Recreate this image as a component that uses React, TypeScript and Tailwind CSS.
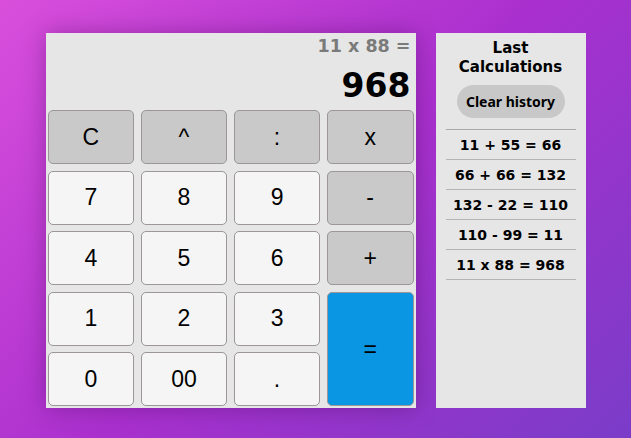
type Key = { label: string; kind: "op" | "num" | "eq" };

const KEYS: Key[] = [
  { label: "C", kind: "op" },
  { label: "^", kind: "op" },
  { label: ":", kind: "op" },
  { label: "x", kind: "op" },
  { label: "7", kind: "num" },
  { label: "8", kind: "num" },
  { label: "9", kind: "num" },
  { label: "-", kind: "op" },
  { label: "4", kind: "num" },
  { label: "5", kind: "num" },
  { label: "6", kind: "num" },
  { label: "+", kind: "op" },
  { label: "1", kind: "num" },
  { label: "2", kind: "num" },
  { label: "3", kind: "num" },
  { label: "=", kind: "eq" },
  { label: "0", kind: "num" },
  { label: "00", kind: "num" },
  { label: ".", kind: "num" },
];

const HISTORY = ["11 + 55 = 66", "66 + 66 = 132", "132 - 22 = 110", "110 - 99 = 11", "11 x 88 = 968"];

const display = "font-['DejaVu_Sans',sans-serif] font-bold";

export default function App() {
  return (
    <div className="flex h-[438px] w-full items-start justify-center gap-5 bg-[linear-gradient(135deg,#d94fdc_0%,#aa30ce_50%,#7a3cc8_100%)] pt-[33px]">
      {/* calculator */}
      <div className="flex h-[375px] w-[370px] flex-col bg-[#e6e6e6] shadow-[0_0_22px_rgba(60,0,80,0.35)]">
        <div className="flex h-[77px] flex-col items-end pr-[5px]">
          <div className={`${display} mt-[2px] text-[17.5px] leading-[22px] text-[#7a7a7a]`}>11 x 88 =</div>
          <div className={`${display} mt-[10px] text-[33px] leading-[38px] text-black`}>968</div>
        </div>
        <div className="grid flex-1 grid-cols-4 grid-rows-5 gap-[6.5px] px-[2px] pb-[2px] font-['Liberation_Sans',Arial,sans-serif] text-[23px] text-black">
          {KEYS.map((k) => (
            <button
              key={k.label}
              className={`flex items-center justify-center rounded-[5px] border border-[#9c9696] ${
                k.kind === "op" ? "bg-[#c9c9c9]" : k.kind === "eq" ? "row-span-2 bg-[#0b96e3]" : "bg-[#f5f5f5]"
              }`}
            >
              {k.label}
            </button>
          ))}
        </div>
      </div>

      {/* history */}
      <div className="flex h-[375px] w-[150px] flex-col items-center bg-[#e6e6e6] px-[10px]">
        <div className={`${display} mt-[6px] text-center text-[15px] leading-[19px] text-black`}>
          Last
          <br />
          Calculations
        </div>
        <button className="mt-[8px] h-[33px] w-[108px] rounded-full bg-[#c8c8c8] font-['Noto_Sans',sans-serif] text-[14px] font-bold text-black">
          Clear history
        </button>
        <div className="mt-[11px] w-full border-t border-[#a9a9a9]">
          {HISTORY.map((h) => (
            <div
              key={h}
              className={`${display} flex h-[30px] items-center justify-center border-b border-[#b4b4b4] pt-[2px] text-[14px] text-black`}
            >
              {h}
            </div>
          ))}
        </div>
      </div>
    </div>
  );
}
